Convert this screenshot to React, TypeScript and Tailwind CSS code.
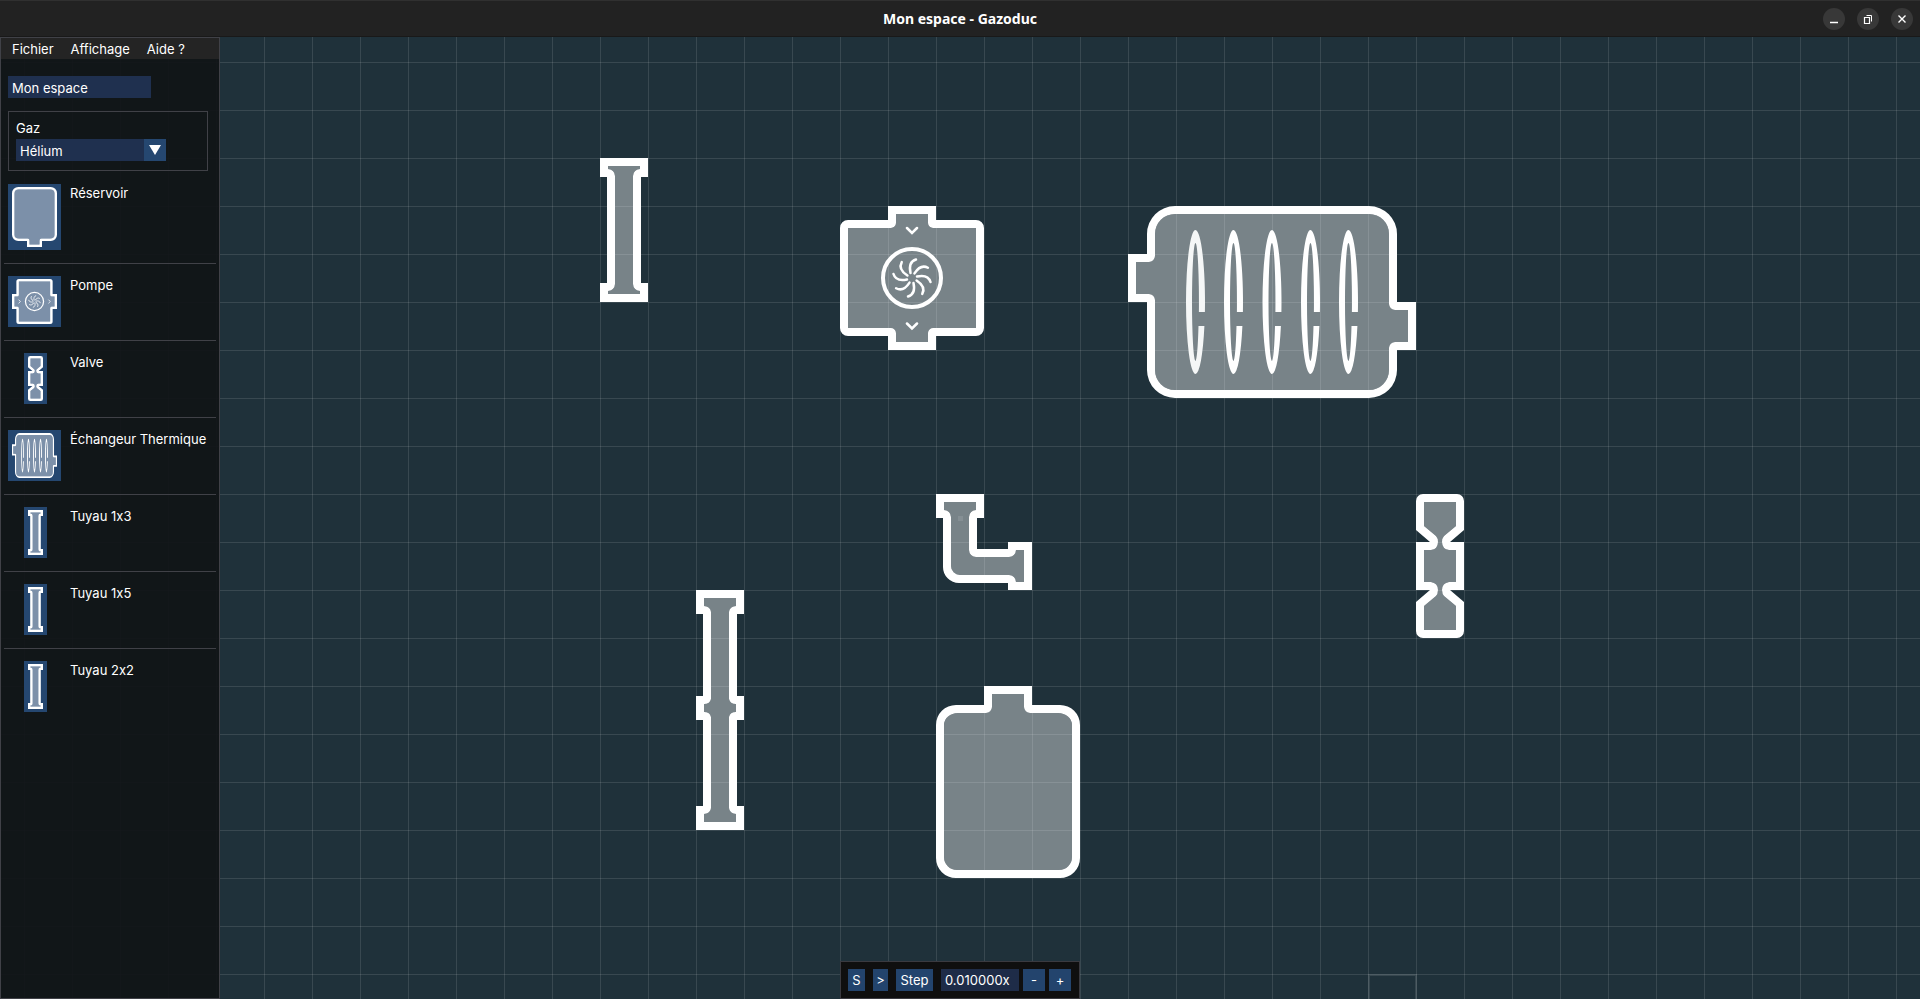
import { useState } from "react";
import type { ReactNode } from "react";

type Kind = "pipe3" | "pipe5" | "elbow" | "valve" | "tank" | "pump" | "exchanger";

interface Shape {
  w: number;
  h: number;
  outer: string;
  inner: string;
  detail?: ReactNode;
}

const BLADES = [0, 45, 90, 135, 180, 225, 270, 315];
const COILS = [67.5, 105.5, 144, 182.5, 220.5];

const coil = (cx: number) =>
  `M${cx} 24A9.5 72 0 0 1 ${cx + 9.4} 106H${cx + 3.4}A3.5 59 0 0 0 ${cx} 37A3.5 59 0 0 0 ${cx} 155A3.5 59 0 0 0 ${cx + 3} 120H${cx + 8.9}A9.5 72 0 0 1 ${cx} 168A9.5 72 0 0 1 ${cx} 24Z`;

const SHAPES: Record<Kind, Shape> = {
  pipe3: {
    w: 48,
    h: 144,
    outer: "M0 0H48V19H41V125H48V144H0V125H7V19H0Z",
    inner:
      "M8 8H40V11A7 7 0 0 0 33 18V126A7 7 0 0 0 40 133V136H8V133A7 7 0 0 0 15 126V18A7 7 0 0 0 8 11Z",
  },
  pipe5: {
    w: 48,
    h: 240,
    outer: "M0 0H48V24H41V106H48V130H41V216H48V240H0V216H7V130H0V106H7V24H0Z",
    inner:
      "M8 8H40V16A7 6 0 0 0 33 22V109A7 6 0 0 0 40 114V122A7 6 0 0 0 33 127V218A7 6 0 0 0 40 224V232H8V224A7 6 0 0 0 15 218V127A7 6 0 0 0 8 122V114A7 6 0 0 0 15 109V22A7 6 0 0 0 8 16Z",
  },
  elbow: {
    w: 96,
    h: 96,
    outer: "M0 0H48V24H41V55H72V48H96V96H72V89H23A16 16 0 0 1 7 73V24H0Z",
    inner:
      "M8 8H40V16A7 7 0 0 0 33 23V56A7 7 0 0 0 40 63H73A7 7 0 0 0 80 56H88V88H80A7 7 0 0 0 73 81H24A9 9 0 0 1 15 72V23A7 7 0 0 0 8 16Z",
    detail: <rect x="22" y="22" width="5" height="5" fill="#fff" fillOpacity=".1" />,
  },
  valve: {
    w: 48,
    h: 144,
    outer:
      "M7 0H41A7 7 0 0 1 48 7V36L34 48H48V96H34L48 108V137A7 7 0 0 1 41 144H7A7 7 0 0 1 0 137V108L14 96H0V48H14L0 36V7A7 7 0 0 1 7 0Z",
    inner:
      "M8 8H40V32L28 42Q26 44 26 48Q26 55 33 56H40V88H33Q26 89 26 96Q26 100 28 102L40 112V136H8V112L20 102Q22 100 22 96Q22 89 15 88H8V56H15Q22 55 22 48Q22 44 20 42L8 32Z",
  },
  tank: {
    w: 144,
    h: 192,
    outer:
      "M48 0H96V19H124A20 20 0 0 1 144 39V172A20 20 0 0 1 124 192H20A20 20 0 0 1 0 172V39A20 20 0 0 1 20 19H48Z",
    inner:
      "M56 8H88V21A6 6 0 0 0 94 27H122A14 12 0 0 1 136 39V171A13 13 0 0 1 123 184H21A13 13 0 0 1 8 171V39A14 12 0 0 1 22 27H50A6 6 0 0 0 56 21Z",
  },
  pump: {
    w: 144,
    h: 144,
    outer:
      "M48 0H96V14H136A8 8 0 0 1 144 22V122A8 8 0 0 1 136 130H96V144H48V130H8A8 8 0 0 1 0 122V22A8 8 0 0 1 8 14H48Z",
    inner:
      "M56 8H88V17A5 5 0 0 0 93 22H136V122H93A5 5 0 0 0 88 127V136H56V127A5 5 0 0 0 51 122H8V22H51A5 5 0 0 0 56 17Z",
    detail: (
      <g fill="none" stroke="#fff" strokeLinecap="round">
        <circle cx="72" cy="72" r="29" strokeWidth="4" />
        <path d="M67 22l5 5 5-5M67 117.500l5 5 5-5" strokeWidth="2.500" />
        {BLADES.map((angle) => (
          <path
            key={angle}
            d="M70.500 67C69 60 71 55 76 53.500"
            strokeWidth="2.500"
            transform={`rotate(${angle} 72 72)`}
          />
        ))}
      </g>
    ),
  },
  exchanger: {
    w: 288,
    h: 192,
    outer:
      "M47 0H241A28 28 0 0 1 269 28V96H288V144H269V164A28 28 0 0 1 241 192H47A28 28 0 0 1 19 164V96H0V48H19V28A28 28 0 0 1 47 0Z",
    inner:
      "M47 8H241A20 20 0 0 1 261 28V98A6 6 0 0 0 267 104H280V136H267A6 6 0 0 0 261 142V164A20 20 0 0 1 241 184H47A20 20 0 0 1 27 164V94A6 6 0 0 0 21 88H8V56H21A6 6 0 0 0 27 50V28A20 20 0 0 1 47 8Z",
    detail: (
      <g>
        {COILS.map((cx, i) => (
          <path key={cx} d={coil(cx)} fill={i === 0 ? "#f5f7f7" : "#fff"} />
        ))}
      </g>
    ),
  },
};

function Drawing({ kind, className, turn = 0 }: { kind: Kind; className: string; turn?: number }) {
  const { w, h, outer, inner, detail } = SHAPES[kind];
  return (
    <svg
      viewBox={`0 0 ${w} ${h}`}
      preserveAspectRatio="none"
      className={className}
      aria-hidden="true"
    >
      <g transform={`rotate(${turn} ${w / 2} ${h / 2})`}>
        <path d={outer + inner} fill="#fff" fillRule="evenodd" />
        <path d={inner} fill="#fff" fillOpacity=".4" />
        {detail}
      </g>
    </svg>
  );
}

const PLACED: { kind: Kind; className: string }[] = [
  { kind: "pipe3", className: "absolute left-[600px] top-[121px] h-[144px] w-[48px]" },
  { kind: "pump", className: "absolute left-[840px] top-[169px] h-[144px] w-[144px]" },
  { kind: "exchanger", className: "absolute left-[1128px] top-[169px] h-[192px] w-[288px]" },
  { kind: "elbow", className: "absolute left-[936px] top-[457px] h-[96px] w-[96px]" },
  { kind: "valve", className: "absolute left-[1416px] top-[457px] h-[144px] w-[48px]" },
  { kind: "pipe5", className: "absolute left-[696px] top-[553px] h-[240px] w-[48px]" },
  { kind: "tank", className: "absolute left-[936px] top-[649px] h-[192px] w-[144px]" },
];

const WIDE = "w-[55px] shrink-0";
const NARROW = "w-[55px] shrink-0 pl-4";

const PALETTE: { label: string; kind: Kind; turn?: number; slot: string; size: string }[] = [
  { label: "Réservoir", kind: "tank", turn: 180, slot: WIDE, size: "h-[60px] w-[45px]" },
  { label: "Pompe", kind: "pump", turn: -90, slot: WIDE, size: "h-[45px] w-[45px]" },
  { label: "Valve", kind: "valve", slot: NARROW, size: "h-[45px] w-[15px]" },
  { label: "Échangeur Thermique", kind: "exchanger", slot: WIDE, size: "h-[45px] w-[45px]" },
  { label: "Tuyau 1x3", kind: "pipe3", slot: NARROW, size: "h-[45px] w-[15px]" },
  { label: "Tuyau 1x5", kind: "pipe3", slot: NARROW, size: "h-[45px] w-[15px]" },
  { label: "Tuyau 2x2", kind: "pipe3", slot: NARROW, size: "h-[45px] w-[15px]" },
];

function WindowButton({ label, children }: { label: string; children: ReactNode }) {
  return (
    <button
      aria-label={label}
      className="flex size-[22px] items-center justify-center rounded-full bg-[#383838] text-white"
    >
      <svg viewBox="0 0 12 12" className="size-3" fill="none" stroke="currentColor">
        {children}
      </svg>
    </button>
  );
}

function TitleBar({ name }: { name: string }) {
  return (
    <header className="grid h-[37px] shrink-0 grid-cols-[1fr_auto_1fr] items-center border-t border-b border-t-[#303030] border-b-[#191919] bg-[#222222] px-[7px]">
      <h1 className="col-start-2 font-['Noto_Sans',sans-serif] text-[14px] font-bold text-white">
        {name} - Gazoduc
      </h1>
      <div className="flex justify-end gap-3">
        <WindowButton label="Réduire">
          <path d="M2 9.500h8" strokeWidth="1.500" />
        </WindowButton>
        <WindowButton label="Restaurer">
          <path d="M2.500 4.500h5v6h-5z" strokeWidth="1.200" />
          <path d="M4.500 2.500h5v6" />
        </WindowButton>
        <WindowButton label="Fermer">
          <path d="M2.500 2.500l7 7M9.500 2.500l-7 7" strokeWidth="1.400" />
        </WindowButton>
      </div>
    </header>
  );
}

export default function App() {
  const [name, setName] = useState("Mon espace");
  const [speed, setSpeed] = useState("0.010000x");

  return (
    <div className="flex min-h-screen flex-col bg-[#1f313a] font-[Inter,sans-serif] text-[13px] leading-4 text-white [font-feature-settings:'calt'_0]">
      <TitleBar name={name} />
      <main className="relative flex flex-1 overflow-hidden">
        <div className="absolute inset-0 bg-[linear-gradient(to_right,#ffffff1c_1px,transparent_1px),linear-gradient(to_bottom,#ffffff1c_1px,transparent_1px)] bg-[size:48px_48px] bg-[position:24px_25px]">
          {PLACED.map((item) => (
            <Drawing key={item.kind} kind={item.kind} className={item.className} />
          ))}
          <div className="absolute left-[1368px] top-[937px] size-[49px] border-2 border-[#ffffff1c]" />
        </div>

        <aside className="relative w-[220px] shrink-0 border border-[#404147] bg-[#111416f0]">
          <nav className="flex h-[21px] items-center gap-[17px] bg-[#242424] px-[11px]">
            <button>Fichier</button>
            <button>Affichage</button>
            <button>Aide ?</button>
          </nav>

          <div className="px-[7px] pt-[17px]">
            <input
              aria-label="Nom de l’espace"
              value={name}
              onChange={(e) => setName(e.target.value)}
              className="block h-[22px] w-[143px] bg-[#1f304f] px-1 pt-px outline-none"
            />

            <div className="mt-[13px] mr-1 border border-[#404147] px-[7px] pt-2 pb-[9px]">
              <label htmlFor="gas" className="block pb-[3px]">
                Gaz
              </label>
              <div className="relative h-[22px] w-[150px]">
                <select
                  id="gas"
                  className="block h-full w-full appearance-none bg-[#1f304f] px-1 pt-px outline-none"
                >
                  <option>Hélium</option>
                </select>
                <span className="pointer-events-none absolute inset-y-0 right-0 flex w-[22px] items-center justify-center bg-[#254770]">
                  <svg viewBox="0 0 12 10" className="h-[10px] w-[12px]" aria-hidden="true">
                    <path d="M0 0H12L6 10Z" fill="#fff" />
                  </svg>
                </span>
              </div>
            </div>
          </div>

          <ul className="px-[3px] pt-[13px]">
            {PALETTE.map((item, i) => (
              <li
                key={item.label}
                className={
                  i === 0
                    ? "flex gap-[7px] px-1 pb-[13px]"
                    : "flex gap-[7px] border-t border-[#404147] px-1 pt-3 pb-[13px]"
                }
              >
                <div className={item.slot}>
                  <button aria-label={item.label} className="block bg-[#254770] px-1 py-[3px]">
                    <Drawing kind={item.kind} turn={item.turn} className={item.size} />
                  </button>
                </div>
                <span className="pt-px whitespace-nowrap">{item.label}</span>
              </li>
            ))}
          </ul>
        </aside>

        <div className="pointer-events-none absolute inset-x-0 bottom-0 flex justify-center">
          <div className="pointer-events-auto flex h-[38px] items-center border border-[#3a3a40] bg-[#0f0f0f] pr-2 pl-[7px]">
            <button className="h-[22px] w-[17px] bg-[#23446d]">S</button>
            <button className="ml-2 h-[22px] w-[15px] bg-[#23446d]">&gt;</button>
            <button className="ml-2 h-[22px] w-[37px] bg-[#23446d]">Step</button>
            <input
              aria-label="Vitesse"
              value={speed}
              onChange={(e) => setSpeed(e.target.value)}
              className="ml-2 h-[22px] w-[78px] bg-[#1e2c48] px-1 outline-none"
            />
            <button className="ml-1 h-[22px] w-[22px] bg-[#23446d]">-</button>
            <button className="ml-1 h-[22px] w-[22px] bg-[#23446d]">+</button>
          </div>
        </div>
      </main>
    </div>
  );
}
